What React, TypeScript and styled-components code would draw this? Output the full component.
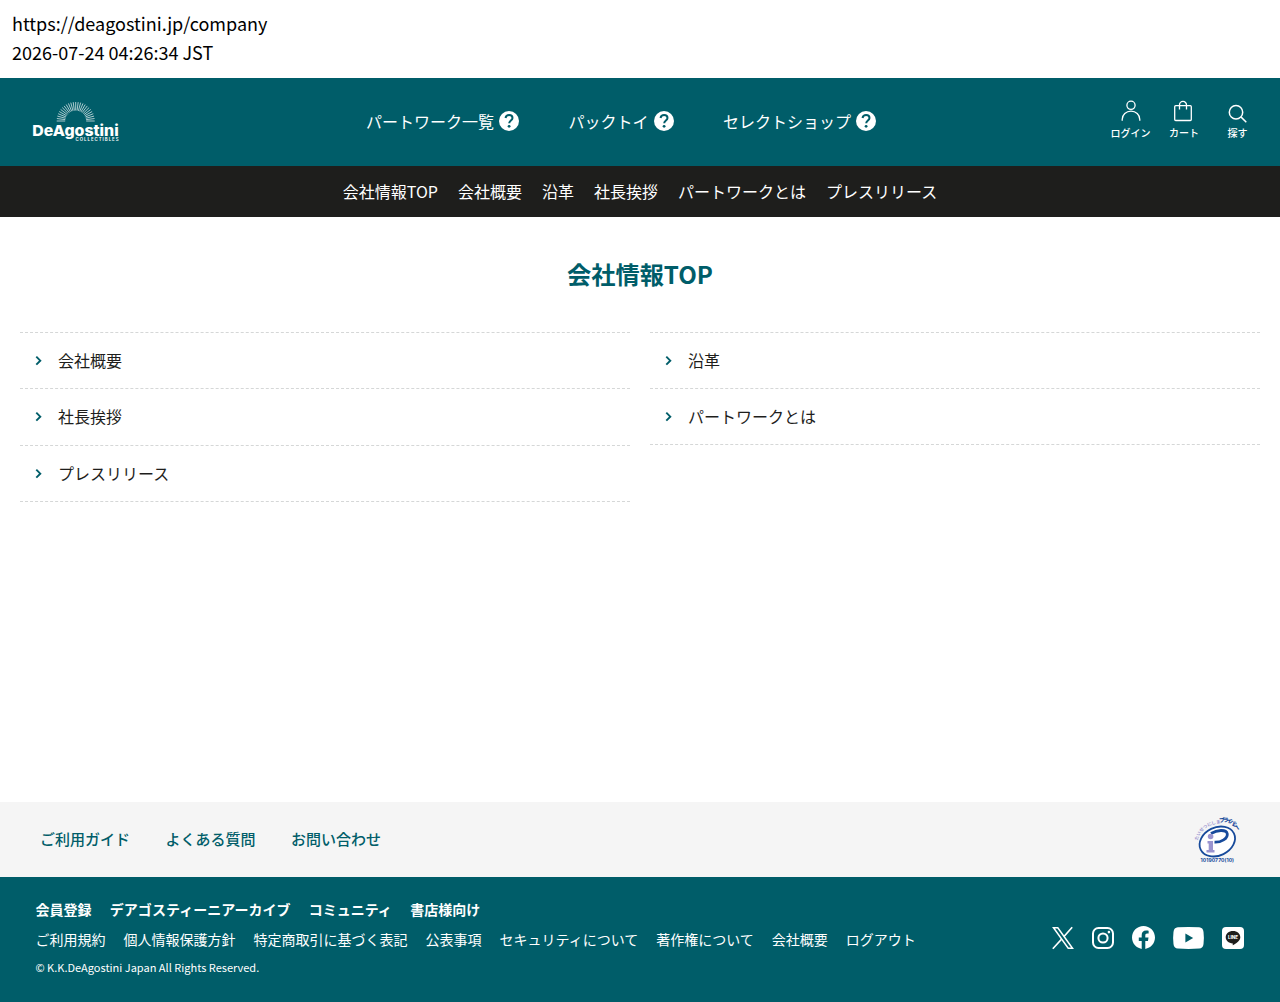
import React from 'react';
import styled, { createGlobalStyle } from 'styled-components';

const TEAL = '#005d69';

const Global = createGlobalStyle`
  *, *::before, *::after { box-sizing: border-box; }
  body {
    margin: 0;
    background: #fff;
    color: #1e1e1c;
    font-family: "Noto Sans CJK JP", "Noto Sans", sans-serif;
    font-size: 16px;
  }
  ul { list-style: none; margin: 0; padding: 0; }
  a { color: inherit; text-decoration: none; }
  svg { display: block; flex: none; overflow: visible; }
`;

const Page = styled.div`
  display: flex;
  flex-direction: column;
  height: 1002px;
`;

const Stamp = styled.div`
  height: 78px;
  padding: 9px 12px;
  color: #000;
  font-size: 18px;
  line-height: 29px;
`;

const Header = styled.header`
  display: grid;
  grid-template-columns: 366px 1fr auto;
  height: 88px;
  background: ${TEAL};
  color: #fff;
`;

const LogoLink = styled.a`
  padding: 20px 0 0 30px;
`;

const MainNav = styled.nav`
  display: flex;
  align-items: center;
  gap: 49.5px;
  padding-bottom: 2px;
`;

const MainLink = styled.a`
  display: flex;
  align-items: center;
  gap: 5px;
  line-height: 24px;
`;

const HelpMark = styled.span`
  display: flex;
  color: #fff;
`;

const Tools = styled.div`
  display: flex;
  padding: 21px 15.5px 0 0;
`;

const Tool = styled.a<{ $width: number }>`
  display: flex;
  flex-direction: column;
  align-items: center;
  width: ${p => p.$width}px;
  font-size: 10px;
  font-weight: 500;
  line-height: 14px;
  gap: 3px;
`;

const SubNav = styled.nav`
  display: flex;
  justify-content: center;
  align-items: center;
  gap: 20px;
  height: 51px;
  padding-bottom: 2px;
  background: #1e1e1c;
  color: #fff;
`;

const Main = styled.main`
  flex: 1;
  padding: 39px 20px 0;
`;

const Title = styled.h1`
  margin: 0 0 40px;
  color: ${TEAL};
  font-size: 24.2px;
  font-weight: 700;
  line-height: 36px;
  text-align: center;
`;

const Columns = styled.div`
  display: grid;
  grid-template-columns: 1fr 1fr;
  align-items: start;
  gap: 20px;
`;

const LinkList = styled.ul`
  border-top: 1px dashed #d5d7d7;
`;

const LinkRow = styled.li<{ $height: number }>`
  display: flex;
  align-items: center;
  gap: 16px;
  height: ${p => p.$height}px;
  padding: 0 0 2px 16px;
  border-bottom: 1px dashed #d5d7d7;
`;

const GuideBar = styled.div`
  display: flex;
  justify-content: space-between;
  align-items: center;
  height: 75px;
  padding: 0 40px;
  background: #f5f5f5;
`;

const GuideLinks = styled.nav`
  display: flex;
  gap: 35.5px;
  padding-bottom: 2px;
  color: ${TEAL};
  font-size: 15px;
  font-weight: 500;
`;

const Footer = styled.footer`
  display: flex;
  justify-content: space-between;
  height: 125px;
  padding: 17px 36px 0 35.5px;
  background: ${TEAL};
  color: #fff;
`;

const FooterRow = styled.nav<{ $bold?: boolean }>`
  display: flex;
  gap: ${p => (p.$bold ? 18.3 : 18)}px;
  font-size: 14px;
  font-weight: ${p => (p.$bold ? 700 : 400)};
  line-height: 30px;
`;

const Copyright = styled.small`
  display: block;
  font-size: 11px;
  line-height: 26px;
`;

const Socials = styled.div`
  display: flex;
  align-items: center;
  gap: 18px;
  height: 23px;
  margin-top: 32px;
`;

const logoRays = Array.from({ length: 25 }, (_, i) => {
  const a = Math.PI + (Math.PI * i) / 24;
  return {
    x1: 45.7 + 10.5 * Math.cos(a),
    y1: 23 + 10.5 * Math.sin(a),
    x2: 45.7 + 19 * Math.cos(a),
    y2: 23 + 19 * Math.sin(a),
  };
});

const Logo = () => (
  <svg width="92" height="48" viewBox="0 0 92 48" fill="#fff">
    <g stroke="#fff" strokeWidth="0.8" opacity="0.85">
      {logoRays.map((r, i) => <line key={i} {...r} />)}
    </g>
    <text x="2.300" y="38.300" fontFamily="Inter, sans-serif" fontWeight="800" fontSize="15" textLength="86.400" lengthAdjust="spacingAndGlyphs">DeAgostini</text>
    <text x="45.500" y="43.200" fontFamily="Inter, sans-serif" fontWeight="600" fontSize="4.300" textLength="43">COLLECTIBLES</text>
  </svg>
);

const Help = () => (
  <HelpMark>
    <svg width="20" height="20" viewBox="0 0 20 20">
      <circle cx="10" cy="10" r="10" fill="currentColor" />
      <path d="M6.500 7C6.900 5.100 8.200 4.100 10.100 4.100c2 0 3.400 1.200 3.400 2.900 0 2.400-3.300 2.700-3.300 5.300" fill="none" stroke={TEAL} strokeWidth="2" />
      <circle cx="10.100" cy="15.300" r="1.400" fill={TEAL} />
    </svg>
  </HelpMark>
);

const UserIcon = () => (
  <svg width="24" height="24" viewBox="0 0 24 24" fill="none" stroke="#fff" strokeWidth="1.300">
    <circle cx="12" cy="6.300" r="4.100" />
    <path d="M3.200 21.700v-1.300a8.800 8.300 0 0 1 17.600 0v1.300" />
  </svg>
);

const CartIcon = () => (
  <svg width="24" height="24" viewBox="0 0 24 24" fill="none" stroke="#fff" strokeWidth="1.300">
    <rect x="2.700" y="6.700" width="16.600" height="14.800" rx="1" />
    <path d="M7.500 10.500V6a3.500 3.600 0 0 1 7 0v4.500" />
  </svg>
);

const SearchIcon = () => (
  <svg width="24" height="24" viewBox="0 0 24 24" fill="none" stroke="#fff" strokeWidth="1.500">
    <circle cx="10" cy="13.200" r="6.700" />
    <path d="m14.900 17.900 5.400 5.400" />
  </svg>
);

const Chevron = () => (
  <svg width="6" height="10" viewBox="0 0 6 10" fill="none" stroke={TEAL} strokeWidth="1.900">
    <path d="m.3 1.700 4 4-4 4" />
  </svg>
);

const PrivacyMark = () => (
  <svg width="46" height="46" viewBox="0 0 46 46">
    <defs>
      <path id="arc-left" d="M4 23.500C5 15.500 12 7.500 25.500 6.500" />
      <path id="arc-right" d="M25.500 5.800C33 3.500 39 6.500 43.500 15" />
    </defs>
    <ellipse cx="23.300" cy="24.500" rx="18.500" ry="14" transform="rotate(-26 23.300 24.500)" fill="#fff" stroke="#174a9b" strokeWidth="1.800" />
    <path d="M17 16.500c6-3.500 15-4.500 16.200 0 1.200 5-6.500 9-12.700 8.700" fill="none" stroke="#174a9b" strokeWidth="2.800" />
    <circle cx="16.600" cy="19.500" r="2.800" fill="#9a94cf" />
    <path d="M13.500 24h5.500v9h1.500v2.500h-8V33h2.200v-6.500h-1.200z" fill="#9a94cf" />
    <text fontSize="4.400" fontWeight="700" fill="#9a94cf"><textPath href="#arc-left">たいせつにします</textPath></text>
    <text fontSize="5.600" fontWeight="900" fill="#174a9b"><textPath href="#arc-right" textLength="21.500" lengthAdjust="spacing">プライバシー</textPath></text>
    <text x="6.500" y="45.300" fontFamily="Inter, sans-serif" fontSize="5" fontWeight="700" fill="#174a9b" textLength="33.500">10190770(10)</text>
  </svg>
);

const XIcon = () => (
  <svg width="22" height="22" viewBox="0 0 22 22" fill="none" stroke="#fff">
    <path d="M1.500.8h4.300l14.700 20.400h-4.300z" strokeWidth="1.500" />
    <path d="m20.200.2-8.200 9.300M9.500 12.300.8 21.800" strokeWidth="1.700" />
  </svg>
);

const InstagramIcon = () => (
  <svg width="22" height="22" viewBox="0 0 22 22" fill="none" stroke="#fff" strokeWidth="2">
    <rect x="1" y="1" width="20" height="20" rx="5.500" />
    <circle cx="11" cy="11" r="4.600" />
    <circle cx="16.900" cy="5.100" r="1.300" fill="#fff" stroke="none" />
  </svg>
);

const FacebookIcon = () => (
  <svg width="23" height="23" viewBox="0 0 24 24" fill="#fff">
    <path d="M24 12.073C24 5.445 18.627.073 12 .073S0 5.445 0 12.073c0 5.990 4.388 10.954 10.125 11.854v-8.385H7.078v-3.469h3.047V9.430c0-3.007 1.792-4.669 4.533-4.669 1.312 0 2.686.235 2.686.235v2.953H15.830c-1.491 0-1.956.925-1.956 1.874v2.250h3.328l-.532 3.469h-2.796v8.385C19.612 23.027 24 18.062 24 12.073z" />
  </svg>
);

const YoutubeIcon = () => (
  <svg width="31" height="22" viewBox="0 0 32 22" preserveAspectRatio="none">
    <path d="M5 .3Q16-.3 27 .3 31 .6 31.500 5q.8 6 0 12-.5 4.300-4.500 4.600-11 .7-22 0-4-.3-4.500-4.600-.8-6 0-12Q1 .6 5 .3z" fill="#fff" />
    <path d="m12.800 6.500 8 4.500-8 4.500z" fill={TEAL} />
  </svg>
);

const LineIcon = () => (
  <svg width="22" height="22" viewBox="0 0 22 22">
    <rect width="22" height="22" rx="4" fill="#fff" />
    <path d="M11 4c4.200 0 7.300 2.700 7.300 6.200 0 2.700-2 4.600-7 7.900-.7.300-.6-.5-.5-1.700C6.500 16.200 3.700 13.500 3.700 10.200 3.700 6.700 6.800 4 11 4z" fill="#1e1e1c" />
    <text x="6" y="12" fontFamily="Inter, sans-serif" fontSize="4.500" fontWeight="800" fill="#fff" textLength="10">LINE</text>
  </svg>
);

const mainLinks = ['パートワーク一覧', 'パックトイ', 'セレクトショップ'];
const subLinks = ['会社情報TOP', '会社概要', '沿革', '社長挨拶', 'パートワークとは', 'プレスリリース'];
const leftRows = [
  { label: '会社概要', height: 56 },
  { label: '社長挨拶', height: 57 },
  { label: 'プレスリリース', height: 56 },
];
const rightRows = [
  { label: '沿革', height: 56 },
  { label: 'パートワークとは', height: 56 },
];
const guideLinks = ['ご利用ガイド', 'よくある質問', 'お問い合わせ'];
const memberLinks = ['会員登録', 'デアゴスティーニアーカイブ', 'コミュニティ', '書店様向け'];
const policyLinks = ['ご利用規約', '個人情報保護方針', '特定商取引に基づく表記', '公表事項', 'セキュリティについて', '著作権について', '会社概要', 'ログアウト'];

const Rows = ({ rows }: { rows: { label: string; height: number }[] }) => (
  <LinkList>
    {rows.map(r => (
      <LinkRow key={r.label} $height={r.height}><Chevron /><a href="#">{r.label}</a></LinkRow>
    ))}
  </LinkList>
);

export default function App() {
  return (
    <>
      <Global />
      <Page>
        <Stamp>
          <div>https://deagostini.jp/company</div>
          <div>2026-07-24 04:26:34 JST</div>
        </Stamp>
        <Header>
          <LogoLink href="#"><Logo /></LogoLink>
          <MainNav>
            {mainLinks.map(l => <MainLink href="#" key={l}>{l}<Help /></MainLink>)}
          </MainNav>
          <Tools>
            <Tool href="#" $width={54}><UserIcon />ログイン</Tool>
            <Tool href="#" $width={53}><CartIcon />カート</Tool>
            <Tool href="#" $width={54}><SearchIcon />探す</Tool>
          </Tools>
        </Header>
        <SubNav>{subLinks.map(l => <a href="#" key={l}>{l}</a>)}</SubNav>
        <Main>
          <Title>会社情報TOP</Title>
          <Columns>
            <Rows rows={leftRows} />
            <Rows rows={rightRows} />
          </Columns>
        </Main>
        <GuideBar>
          <GuideLinks>{guideLinks.map(l => <a href="#" key={l}>{l}</a>)}</GuideLinks>
          <PrivacyMark />
        </GuideBar>
        <Footer>
          <div>
            <FooterRow $bold>{memberLinks.map(l => <a href="#" key={l}>{l}</a>)}</FooterRow>
            <FooterRow>{policyLinks.map(l => <a href="#" key={l}>{l}</a>)}</FooterRow>
            <Copyright>© K.K.DeAgostini Japan All Rights Reserved.</Copyright>
          </div>
          <Socials>
            <XIcon /><InstagramIcon /><FacebookIcon /><YoutubeIcon /><LineIcon />
          </Socials>
        </Footer>
      </Page>
    </>
  );
}
